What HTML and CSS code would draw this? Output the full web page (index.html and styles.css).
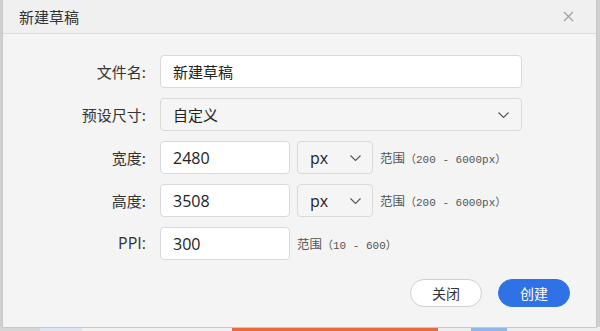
FILE: index.html
```html
<!DOCTYPE html>
<html lang="zh-CN">
<head>
<meta charset="utf-8">
<title>新建草稿</title>
<link rel="stylesheet" href="styles.css">
</head>
<body>
<div class="app">
  <div class="app-strip">
    <span class="strip-gray"></span>
    <span class="strip-blue"></span>
    <span class="strip-fill"></span>
    <span class="strip-orange"></span>
    <span class="strip-text"></span>
  </div>
</div>
<div class="dialog">
  <div class="dialog-head">
    <span class="dialog-title">新建草稿</span>
    <svg class="close" width="11" height="11" viewBox="0 0 11 11"><path d="M1 1L10 10M10 1L1 10" stroke="#a0a0a0" stroke-width="1.2" fill="none"/></svg>
  </div>
  <div class="dialog-body">
    <div class="form">
      <label class="label">文件名:</label>
      <div class="control"><div class="field wide">新建草稿</div></div>

      <label class="label">预设尺寸:</label>
      <div class="control"><div class="field wide select">自定义<svg class="chev" width="11" height="6" viewBox="0 0 11 6"><path d="M0.5 0.5L5.5 5.5L10.5 0.5" stroke="#555" stroke-width="1.1" fill="none"/></svg></div></div>

      <label class="label">宽度:</label>
      <div class="control">
        <div class="field num">2480</div>
        <div class="field unit select">px<svg class="chev" width="11" height="6" viewBox="0 0 11 6"><path d="M0.5 0.5L5.5 5.5L10.5 0.5" stroke="#555" stroke-width="1.1" fill="none"/></svg></div>
        <span class="range">范围<span class="mono">（200 - 6000px）</span></span>
      </div>

      <label class="label">高度:</label>
      <div class="control">
        <div class="field num">3508</div>
        <div class="field unit select">px<svg class="chev" width="11" height="6" viewBox="0 0 11 6"><path d="M0.5 0.5L5.5 5.5L10.5 0.5" stroke="#555" stroke-width="1.1" fill="none"/></svg></div>
        <span class="range">范围<span class="mono">（200 - 6000px）</span></span>
      </div>

      <label class="label latin">PPI:</label>
      <div class="control">
        <div class="field num">300</div>
        <span class="range">范围<span class="mono">（10 - 600）</span></span>
      </div>
    </div>
    <div class="actions">
      <button class="btn btn-plain">关闭</button>
      <button class="btn btn-primary">创建</button>
    </div>
  </div>
</div>
</body>
</html>
```

FILE: styles.css
```css
* { box-sizing: border-box; }
html, body { margin: 0; padding: 0; }
body {
  width: 600px;
  height: 331px;
  overflow: hidden;
  background: #cfcfcf;
  font-family: "Noto Sans CJK SC", "Noto Sans", sans-serif;
  position: relative;
}
.app {
  height: 331px;
  display: flex;
  flex-direction: column;
  justify-content: flex-end;
}
.app-strip {
  height: 4px;
  display: flex;
  background: #eeeeee;
}
.strip-gray { width: 40px; background: #d6d6d6; }
.strip-blue { width: 42px; background: #dbe6f3; }
.strip-fill { width: 150px; background: #f1f1f1; }
.strip-orange { width: 206px; background: #e96a3c; }
.strip-text { width: 36px; margin-left: 33px; background: #8db8ea; }

.dialog {
  position: absolute;
  left: 2px;
  top: 0;
  width: 595px;
  height: 328px;
  background: #f4f4f4;
  border: 1px solid #c9c9c9;
  border-top: none;
  display: flex;
  flex-direction: column;
}
.dialog-head {
  height: 34px;
  flex: none;
  background: #f0f0f0;
  border-bottom: 1px solid #dcdcdc;
  display: flex;
  align-items: center;
  justify-content: space-between;
  padding: 0 22px 0 16px;
}
.dialog-title {
  font-size: 15px;
  color: #333;
  line-height: 1;
}
.close { display: block; }
.dialog-body {
  flex: 1;
  display: flex;
  flex-direction: column;
  padding: 21px 74px 20px 0;
}
.form {
  display: grid;
  grid-template-columns: 143px 1fr;
  column-gap: 14px;
  row-gap: 10px;
  align-items: center;
}
.label {
  text-align: right;
  font-size: 15px;
  color: #333;
  line-height: 33px;
}
.label.latin { font-family: "Open Sans", "Noto Sans CJK SC", sans-serif; font-size: 16px; }
.control {
  display: flex;
  align-items: center;
  gap: 7px;
  height: 33px;
}
.field {
  height: 33px;
  border: 1px solid #d9d9d9;
  border-radius: 4px;
  background: #fff;
  font-size: 15px;
  color: #222;
  display: flex;
  align-items: center;
  padding: 0 12px;
}
.field.wide { width: 100%; }
.field.select {
  background: #f5f5f5;
  justify-content: space-between;
}
.field.num {
  width: 130px;
  font-family: "Open Sans", "Noto Sans CJK SC", sans-serif;
  font-size: 16px;
}
.field.unit {
  width: 76px;
  font-family: "Open Sans", sans-serif;
  font-size: 16px;
  padding: 0 11px 0 12px;
}
.chev { display: block; }
.range {
  font-size: 12.5px;
  color: #555;
  white-space: nowrap;
}
.mono {
  font-family: "Liberation Mono", "Noto Sans CJK SC", monospace;
  font-size: 11px;
}
.actions {
  margin-top: auto;
  display: flex;
  justify-content: flex-end;
  gap: 16px;
  margin-right: -48px;
}
.btn {
  width: 72px;
  height: 28px;
  border-radius: 14px;
  font-family: "Noto Sans CJK SC", sans-serif;
  font-size: 14px;
  padding: 0;
  cursor: pointer;
}
.btn-plain {
  background: #fff;
  border: 1px solid #cfcfcf;
  color: #333;
}
.btn-primary {
  background: #2f72e6;
  border: 1px solid #2f72e6;
  color: #fff;
}
```
